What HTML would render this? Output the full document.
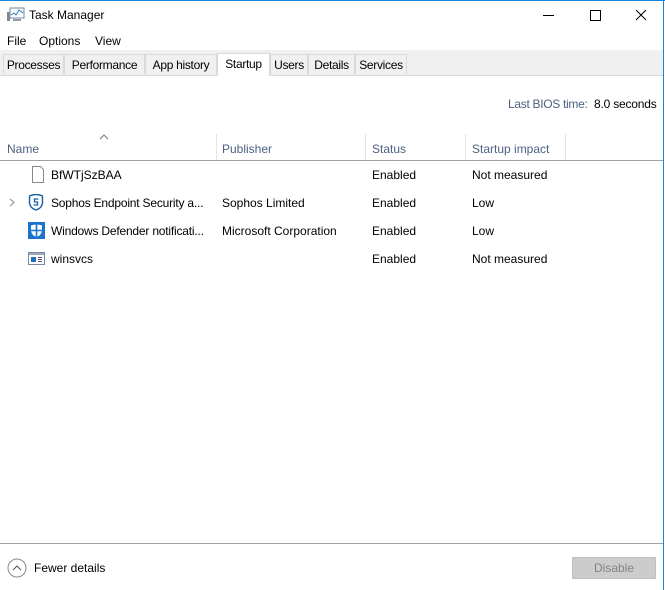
<!DOCTYPE html><html><head><style>
body{margin:0;width:665px;height:590px;overflow:hidden;background:#fff;font-family:"Liberation Sans",sans-serif;font-size:12px;color:#000;position:relative}
.a{position:absolute;white-space:nowrap}
.tab{position:absolute;top:54px;height:20px;background:#f0f0f0;border:1px solid #d9d9d9;border-bottom:none;box-sizing:border-box;line-height:20px;text-align:center;letter-spacing:-0.3px}
.g{color:#4d6082}
.sep{position:absolute;top:134px;width:1px;height:26px;background:#e5e5e5}
</style></head><body>
<div class="a" style="left:0;top:0;width:665px;height:1px;background:#1883d7"></div>
<div class="a" style="left:663px;top:0;width:1px;height:590px;background:#1883d7"></div>
<svg class="a" style="left:7px;top:7px" width="18" height="16"><rect x="3" y="1" width="14" height="10" fill="#fff" stroke="#6a8aa8"/><polyline points="4,8 7,6 9,8 12,3 16,6" fill="none" stroke="#3a7ab8"/><rect x="0" y="5" width="3" height="9" fill="#888"/><rect x="6" y="12" width="8" height="2" fill="#999"/></svg>
<div class="a" style="left:29px;top:8px;font-size:12px">Task Manager</div>
<div class="a" style="left:543px;top:15px;width:11px;height:1px;background:#000"></div>
<div class="a" style="left:590px;top:10px;width:9px;height:9px;border:1px solid #000"></div>
<svg class="a" style="left:635px;top:9px" width="12" height="12"><path d="M1 1L11 11M11 1L1 11" stroke="#000"/></svg>
<div class="a" style="left:7px;top:34px">File</div>
<div class="a" style="left:39px;top:34px">Options</div>
<div class="a" style="left:95px;top:34px">View</div>
<div class="a" style="left:0;top:50px;width:663px;height:25px;background:#f0f0f0"></div>
<div class="a" style="left:0;top:75px;width:663px;height:1px;background:#d9d9d9"></div>
<div class="tab" style="left:3px;width:61px">Processes</div>
<div class="tab" style="left:64px;width:81px">Performance</div>
<div class="tab" style="left:145px;width:72px">App history</div>
<div class="tab" style="left:217px;top:53px;height:23px;width:53px;background:#fff;line-height:20px">Startup</div>
<div class="tab" style="left:270px;width:38px">Users</div>
<div class="tab" style="left:308px;width:47px">Details</div>
<div class="tab" style="left:355px;width:52px">Services</div>
<div class="a g" style="left:508px;top:97px;letter-spacing:-0.3px">Last BIOS time:</div>
<div class="a" style="left:594px;top:97px;letter-spacing:-0.2px">8.0 seconds</div>
<svg class="a" style="left:99px;top:134px" width="10" height="6"><path d="M1 5L5 1L9 5" fill="none" stroke="#777"/></svg>
<div class="a g" style="left:7px;top:142px">Name</div>
<div class="a g" style="left:222px;top:142px">Publisher</div>
<div class="a g" style="left:372px;top:142px">Status</div>
<div class="a g" style="left:472px;top:142px">Startup impact</div>
<div class="sep" style="left:216px"></div><div class="sep" style="left:365px"></div><div class="sep" style="left:465px"></div><div class="sep" style="left:565px"></div>
<div class="a" style="left:0;top:160px;width:663px;height:1px;background:#a0a0a0"></div>
<svg class="a" style="left:31px;top:166px" width="14" height="17"><path d="M1.5 .5H9.5L12.5 3.5V16.5H1.5Z" fill="#fff" stroke="#888"/></svg>
<div class="a" style="left:51px;top:168px">BfWTjSzBAA</div>
<svg class="a" style="left:9px;top:198px" width="6" height="9"><path d="M1 1L5 4.5L1 8" fill="none" stroke="#888"/></svg>
<svg class="a" style="left:28px;top:194px" width="16" height="17"><path d="M1.5 2Q8 -1 14.5 2V9Q14 14 8 16Q2 14 1.5 9Z" fill="#fff" stroke="#1b5fa8" stroke-width="1.4"/><path d="M10.5 5H6.5V8H9.5V11H5.5" fill="none" stroke="#1b5fa8" stroke-width="1.3"/></svg>
<div class="a" style="left:51px;top:196px;letter-spacing:-0.2px">Sophos Endpoint Security a...</div>
<div class="a" style="left:222px;top:196px">Sophos Limited</div>
<svg class="a" style="left:28px;top:222px" width="17" height="17"><rect width="17" height="17" fill="#1874cd"/><path d="M3 3.5Q8.5 1.5 14 3.5V9Q13 13.5 8.5 15Q4 13.5 3 9Z" fill="#fff"/><path d="M8.5 2V15M2.5 8.5H14.5" stroke="#1874cd" stroke-width="1.6"/></svg>
<div class="a" style="left:51px;top:224px;letter-spacing:-0.2px">Windows Defender notificati...</div>
<div class="a" style="left:222px;top:224px">Microsoft Corporation</div>
<svg class="a" style="left:28px;top:252px" width="17" height="13"><rect x=".5" y=".5" width="16" height="12" fill="#fff" stroke="#7a8a9a"/><rect x="1" y="1" width="15" height="2" fill="#9ab"/><rect x="3" y="5" width="5" height="5" fill="#1f6fc0"/><path d="M10 5.5h4M10 7.5h4M10 9.5h4" stroke="#557"/></svg>
<div class="a" style="left:51px;top:252px">winsvcs</div>
<div class="a" style="left:372px;top:168px">Enabled</div><div class="a" style="left:472px;top:168px">Not measured</div>
<div class="a" style="left:372px;top:196px">Enabled</div><div class="a" style="left:472px;top:196px">Low</div>
<div class="a" style="left:372px;top:224px">Enabled</div><div class="a" style="left:472px;top:224px">Low</div>
<div class="a" style="left:372px;top:252px">Enabled</div><div class="a" style="left:472px;top:252px">Not measured</div>
<div class="a" style="left:0;top:543px;width:663px;height:1px;background:#a0a0a0"></div>
<svg class="a" style="left:7px;top:558px" width="20" height="20"><circle cx="10" cy="10" r="9" fill="#fff" stroke="#888"/><path d="M6 12L10 8L14 12" fill="none" stroke="#555"/></svg>
<div class="a" style="left:34px;top:561px">Fewer details</div>
<div class="a" style="left:572px;top:557px;width:82px;height:20px;background:#ccc;border:1px solid #bfbfbf;color:#838383;text-align:center;line-height:20px">Disable</div>
</body></html>
